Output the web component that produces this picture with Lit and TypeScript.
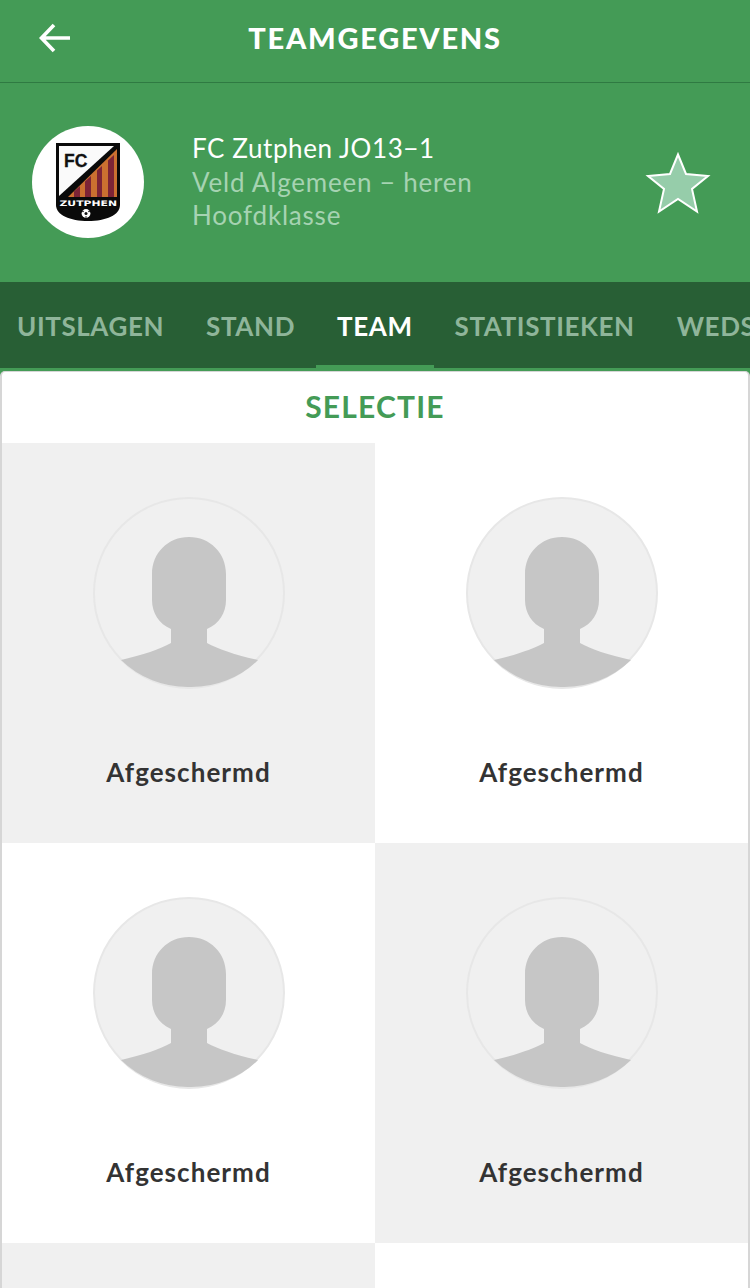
import { LitElement, html, css } from "lit";
import { customElement } from "lit/decorators.js";

const avatar = html`<svg class="avatar" viewBox="0 0 192 192" aria-hidden="true">
  <circle cx="96" cy="96" r="95" fill="#f0f0f0" stroke="#e7e7e7" stroke-width="2"/>
  <path fill="#c6c6c6" d="M28 163 C50 158 67 152 78 146 L78 132 C66 127 59 116 59 103 L59 77 C59 56 75 40 96 40 C117 40 133 56 133 77 L133 103 C133 116 126 127 114 132 L114 146 C125 152 142 158 165 163 A95 95 0 0 1 96 190 A95 95 0 0 1 28 163 Z"/>
</svg>`;

const crest = html`<svg class="crest" viewBox="0 0 64 78" aria-hidden="true">
  <path fill="#0a0a0a" d="M0 0 H64 V62 C64 72 50 78 32 78 C14 78 0 72 0 62 Z"/>
  <path fill="#fafafa" d="M3 3 H58 L3 53 Z"/>
  <path fill="#cb7030" d="M61 6 V54 H12 Z"/>
  <g fill="#7d2436">
    <path d="M18 48.5 L24 43 V54 H18Z"/><path d="M29 38.5 L35 33 V54 H29Z"/><path d="M41 27.5 L46 23 V54 H41Z"/><path d="M52 17.5 L58 12 V54 H52Z"/>
  </g>
  <text x="8" y="24.3" class="fc">FC</text>
  <text x="3.5" y="63.4" class="zu" textLength="57.5" lengthAdjust="spacingAndGlyphs">ZUTPHEN</text>
  <circle cx="30" cy="70.5" r="4.4" fill="#fff"/>
  <circle cx="30" cy="70.5" r="1.5" fill="#111"/>
  <circle cx="27" cy="68.5" r=".8" fill="#111"/><circle cx="33" cy="68.5" r=".8" fill="#111"/><circle cx="30" cy="74" r=".8" fill="#111"/>
</svg>`;

@customElement("app-root")
export class AppRoot extends LitElement {
  static styles = css`
    :host { display: block; width: 750px; height: 1288px; overflow: hidden; background: #449b56; font-family: Lato, "Open Sans", sans-serif; }
    .bar { height: 82px; display: flex; align-items: center; justify-content: center; position: relative; border-bottom: 1px solid #2f7a42; box-sizing: content-box; }
    .back { position: absolute; left: 39px; top: 23px; width: 32px; height: 30px; }
    .title { color: #fff; font-size: 29px; font-weight: 900; letter-spacing: 1.75px; margin-top: -8px; }
    .team { height: 199px; display: flex; align-items: center; padding: 0 40px 0 32px; box-sizing: border-box; }
    .logo { width: 112px; height: 112px; border-radius: 50%; background: #fff; display: flex; align-items: center; justify-content: center; flex: none; margin-top: -2px; }
    .crest { width: 64px; height: 78px; display: block; }
    .fc { font: 700 17.5px "Liberation Sans", sans-serif; fill: #111; stroke: #111; stroke-width: .3px; }
    .zu { font: 700 7.7px "DejaVu Sans", sans-serif; fill: #fff; }
    .info { margin-left: 48px; flex: 1; font-size: 26px; line-height: 33px; letter-spacing: .8px; color: #a6d3b2; }
    .name { color: #fff; letter-spacing: .58px; margin-bottom: 1px; margin-top: -1px; }
    .star { width: 66px; height: 64px; flex: none; margin: 0 -1px 0 0; }
    .tabs { height: 86px; background: #285f35; display: flex; overflow: hidden; }
    .tab { flex: none; padding: 0 21px; font-size: 26px; font-weight: 700; letter-spacing: .6px; color: #8fb59a; height: 86px; line-height: 88px; box-sizing: border-box; border-bottom: 3px solid transparent; white-space: nowrap; }
    .tab:first-child { margin-left: -4px; }
    .tab.on { color: #fff; border-bottom-color: #449b56; }
    .card { margin-top: 3px; background: #fff; border-radius: 5px 5px 0 0; border-left: 2px solid #d6d6d6; border-right: 2px solid #d6d6d6; border-top: 1px solid #d6d6d6; height: 917px; overflow: hidden; box-sizing: border-box; }
    .head { height: 71px; line-height: 68px; text-align: center; color: #449b56; font-size: 30px; font-weight: 700; letter-spacing: 1.2px; }
    .grid { display: grid; grid-template-columns: 373px 373px; grid-auto-rows: 400px; }
    .cell { display: flex; flex-direction: column; align-items: center; padding-top: 54px; box-sizing: border-box; }
    .cell.alt { background: #f0f0f0; }
    .avatar { width: 192px; height: 192px; display: block; }
    .who { margin-top: 67px; font-size: 26px; font-weight: 700; letter-spacing: 1.05px; color: #333; }
  `;

  render() {
    const cell = (alt: boolean) => html`<div class="cell ${alt ? "alt" : ""}">${avatar}<div class="who">Afgeschermd</div></div>`;
    return html`
      <div class="bar">
        <svg class="back" viewBox="0 0 32 30" aria-hidden="true"><path d="M31 15 H3 M15 2 L2.5 15 L15 28" fill="none" stroke="#fff" stroke-width="3.6"/></svg>
        <div class="title">TEAMGEGEVENS</div>
      </div>
      <div class="team">
        <div class="logo">${crest}</div>
        <div class="info">
          <div class="name">FC Zutphen JO13−1</div>
          <div>Veld Algemeen − heren</div>
          <div>Hoofdklasse</div>
        </div>
        <svg class="star" viewBox="0 0 66 64" aria-hidden="true"><path d="M33 3.5 L41 23 L63 25 L47 38 L52 60.5 L33 48 L14 60.5 L19 38 L3 25 L25 23 Z" fill="#96cdaa" stroke="#fff" stroke-width="2"/></svg>
      </div>
      <div class="tabs">
        <div class="tab">UITSLAGEN</div>
        <div class="tab">STAND</div>
        <div class="tab on">TEAM</div>
        <div class="tab">STATISTIEKEN</div>
        <div class="tab">WEDS</div>
      </div>
      <div class="card">
        <div class="head">SELECTIE</div>
        <div class="grid">
          ${cell(true)}${cell(false)}${cell(false)}${cell(true)}
          <div class="cell alt"></div><div class="cell"></div>
        </div>
      </div>
    `;
  }
}
